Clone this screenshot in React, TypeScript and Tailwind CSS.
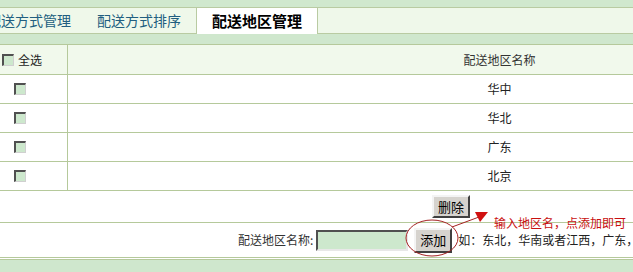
const rows = ["华中", "华北", "广东", "北京"];

const cjk = { fontFamily: '"Noto Sans CJK SC", "Liberation Sans", sans-serif' };

function Check() {
  return (
    <span className="block w-[12px] h-[12px] bg-[#cde8cd] border-t-2 border-l-2 border-r border-b border-t-[#505050] border-l-[#505050] border-r-[#d0d0d0] border-b-[#d0d0d0]" />
  );
}

export default function App() {
  return (
    <div
      className="relative w-[633px] h-[272px] overflow-hidden bg-white text-[12px] text-[#222]"
      style={cjk}
    >
      <div className="h-[7px] bg-[#d0e8ce]" />

      {/* tabs */}
      <div className="flex h-[27px] w-[960px] bg-[#eff8ea] border-y border-[#b9cba2]">
        <div className="flex items-center ml-[-13px] w-[110px] text-[14px] text-[#215e80]">配送方式管理</div>
        <div className="flex items-center w-[98px] text-[14px] text-[#215e80]">配送方式排序</div>
        <div className="flex items-center justify-center w-[122px] ml-[1px] -mb-px bg-white border-x border-[#b9cba2] text-[15px] font-bold text-black">
          配送地区管理
        </div>
      </div>

      <div className="h-[10px] bg-[#cfe7cd]" />

      {/* table */}
      <div className="w-[931px] border-t border-[#b5c99b]">
        <div className="flex h-[30px] bg-[#f1f9ec] border-b border-[#b5c99b]">
          <div className="flex items-center gap-[4px] w-[68px] pl-[2px] border-r border-[#b5c99b]">
            <Check />
            <span>全选</span>
          </div>
          <div className="flex flex-1 items-center justify-center text-[#333]">配送地区名称</div>
        </div>
        {rows.map((r) => (
          <div key={r} className="flex h-[29px] border-b border-[#b5c99b]">
            <div className="flex items-center w-[68px] pl-[14px] border-r border-[#b5c99b]">
              <Check />
            </div>
            <div className="flex flex-1 items-center justify-center">{r}</div>
          </div>
        ))}

        <div className="flex items-center h-[32px] pl-[432px] border-b border-[#b5c99b]">
          <button className="w-[38px] h-[23px] bg-[#d6d3ce] text-[13px] text-black border-2 border-t-[#f4f4f4] border-l-[#f4f4f4] border-r-[#404040] border-b-[#404040]">
            删除
          </button>
        </div>

        <div className="flex items-center h-[35px] pl-[238px] border-b border-[#b5c99b]">
          <span className="text-[#333]">配送地区名称:</span>
          <span className="ml-[3px] w-[92px] h-[21px] bg-[#cde8cd] border-2 border-t-[#505050] border-l-[#505050] border-r-[#e8e8e8] border-b-[#e8e8e8]" />
          <button className="ml-[6px] w-[38px] h-[25px] bg-[#d6d3ce] text-[13px] text-black border-2 border-t-[#f4f4f4] border-l-[#f4f4f4] border-r-[#404040] border-b-[#404040]">
            添加
          </button>
          <span className="ml-[6px] whitespace-nowrap text-[#222]">如：东北，华南或者江西，广东，广西</span>
        </div>
      </div>

      <div className="h-[1px]" />
      <div className="h-[14px] bg-[#cfe7cd] border-t border-[#b5c99b]" />

      {/* annotation */}
      <svg className="absolute left-0 top-0 pointer-events-none" width="633" height="272">
        <ellipse cx="432" cy="238" rx="26" ry="18" fill="none" stroke="#a52222" strokeWidth="1" />
        <line x1="452" y1="227" x2="479" y2="217" stroke="#a52222" strokeWidth="1" />
        <polygon points="488,212 475,212 480,222" fill="#d01010" />
      </svg>
      <span className="absolute left-[494px] top-[214px] whitespace-nowrap text-[12px] text-[#c81010]">
        输入地区名，点添加即可
      </span>
    </div>
  );
}
